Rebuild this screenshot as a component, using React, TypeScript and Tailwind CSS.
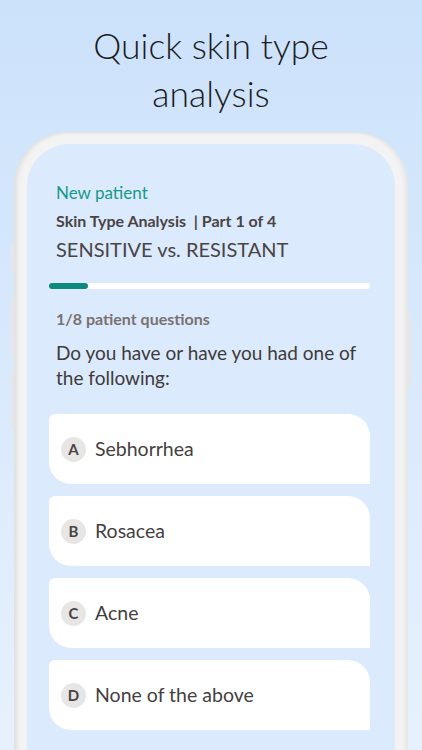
import React from 'react';

const options = [
  { key: 'A', label: 'Sebhorrhea' },
  { key: 'B', label: 'Rosacea' },
  { key: 'C', label: 'Acne' },
  { key: 'D', label: 'None of the above' },
];

function OptionCard({ letter, label }: { letter: string; label: string }) {
  return (
    <div className="flex h-[70px] items-center rounded-tl-[6px] rounded-tr-[22px] rounded-bl-[22px] bg-white pl-[12px]">
      <span className="flex h-[25px] w-[25px] items-center justify-center rounded-full bg-[#e8e6e5] text-[15px] font-bold text-[#4a4444]">
        {letter}
      </span>
      <span className="ml-[9px] text-[19.5px] text-[#453f3f]">{label}</span>
    </div>
  );
}

export default function App() {
  return (
    <div
      className="relative h-[750px] w-[422px] overflow-hidden bg-gradient-to-b from-[#cce2fb] to-[#e7f1fd]"
      style={{ fontFamily: 'Lato, "Noto Sans", sans-serif' }}
    >
      <h1 className="pt-[22px] text-center text-[35.5px] font-light leading-[48px] text-[#1c1c1e]">
        Quick skin type
        <br />
        analysis
      </h1>

      {/* phone frame */}
      <div className="relative mx-[14px] mt-[14px] h-[640px] rounded-t-[54px] bg-[#f3f3f3] px-[13px] pt-[12px] shadow-[inset_-3px_0_4px_rgba(0,0,0,0.06),inset_3px_0_4px_rgba(0,0,0,0.08)]">
        <div className="h-full rounded-t-[42px] bg-[#dbeafc] pl-[22px] pr-[25px] pt-[38px]">
          <div className="px-[7px]">
            <p className="text-[17px] leading-[22px] text-[#17998a]">New patient</p>
            <p className="mt-[7px] text-[16px] font-bold leading-[20px] text-[#4a4444]">
              Skin Type Analysis &nbsp;| Part 1 of 4
            </p>
            <p className="mt-[5px] text-[20px] leading-[26px] text-[#4a4444]">SENSITIVE vs. RESISTANT</p>
          </div>

          <div className="mt-[21px] h-[6px] w-full rounded-full bg-white">
            <div className="h-full w-[39px] rounded-full bg-[#0d8a7b]" />
          </div>

          <div className="px-[7px]">
            <p className="mt-[20px] text-[16px] font-bold leading-[20px] text-[#7a7272]">1/8 patient questions</p>
            <p className="mt-[11px] text-[19px] leading-[25px] text-[#3f3a3a]">
              Do you have or have you had one of the following:
            </p>
          </div>

          <div className="mt-[24px] flex flex-col gap-[12px]">
            {options.map((o) => (
              <OptionCard key={o.key} letter={o.key} label={o.label} />
            ))}
          </div>
        </div>

        {/* side buttons */}
        <div className="absolute left-[-3px] top-[110px] h-[30px] w-[3px] rounded-l bg-[#e4e6ea]" />
        <div className="absolute left-[-3px] top-[165px] h-[60px] w-[3px] rounded-l bg-[#e4e6ea]" />
        <div className="absolute left-[-3px] top-[239px] h-[58px] w-[3px] rounded-l bg-[#e4e6ea]" />
        <div className="absolute right-[-3px] top-[180px] h-[76px] w-[3px] rounded-r bg-[#e4e6ea]" />
      </div>
    </div>
  );
}
